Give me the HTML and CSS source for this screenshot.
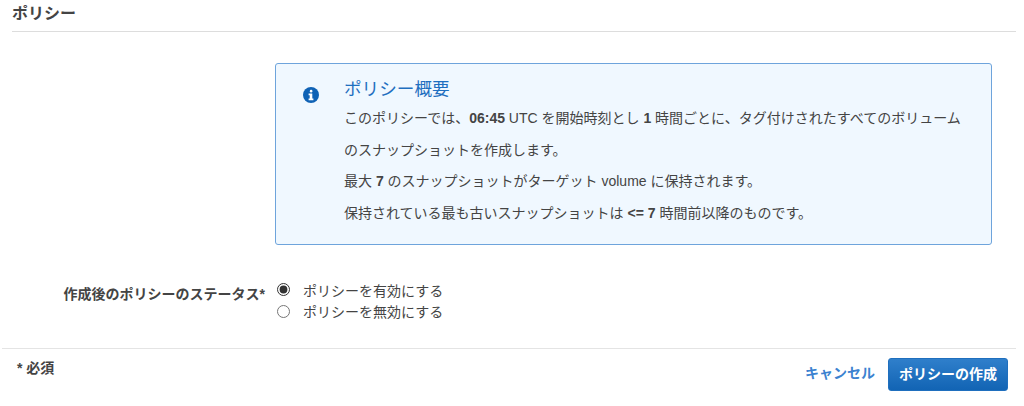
FILE: index.html
```html
<!DOCTYPE html>
<html lang="ja">
<head>
<meta charset="utf-8">
<title>ポリシー</title>
<link rel="stylesheet" href="styles.css">
</head>
<body>
<main class="page">
  <header class="section-head"><h2 class="section-title">ポリシー</h2></header>
  <div class="summary-row">
    <section class="info-box">
      <svg class="info-icon" width="16" height="16" viewBox="0 0 16 16" aria-hidden="true">
        <circle cx="8" cy="8" r="8" fill="#0f62b5"/>
        <rect x="6.8" y="2.8" width="2.6" height="2.6" rx="1.2" fill="#fff"/>
        <path d="M5.6 6.6h3.7v5h1.1v1.6H5.6v-1.6h1.1V8.2H5.6z" fill="#fff"/>
      </svg>
      <div class="info-body">
        <h3 class="info-title">ポリシー概要</h3>
        <p class="info-line">このポリシーでは、<b>06:45</b> UTC を開始時刻とし <b>1</b> 時間ごとに、タグ付けされたすべてのボリューム<br>のスナップショットを作成します。</p>
        <p class="info-line">最大 <b>7</b> のスナップショットがターゲット volume に保持されます。</p>
        <p class="info-line">保持されている最も古いスナップショットは <b>&lt;= 7</b> 時間前以降のものです。</p>
      </div>
    </section>
  </div>
  <div class="status-row">
    <div class="status-label">作成後のポリシーのステータス*</div>
    <div class="radio-group">
      <label class="radio-item"><input class="radio-input" type="radio" name="status" checked><span>ポリシーを有効にする</span></label>
      <label class="radio-item"><input class="radio-input" type="radio" name="status"><span>ポリシーを無効にする</span></label>
    </div>
  </div>
  <footer class="footer">
    <div class="required">* 必須</div>
    <div class="actions">
      <a class="cancel" href="#">キャンセル</a>
      <button class="primary" type="button">ポリシーの作成</button>
    </div>
  </footer>
</main>
</body>
</html>
```

FILE: styles.css
```css
* { box-sizing: border-box; }
html, body { margin: 0; padding: 0; background: #fff; }
body {
  width: 1024px;
  height: 406px;
  overflow: hidden;
  font-family: "Liberation Sans", "Noto Sans CJK JP", sans-serif;
  font-size: 14px;
  color: #444;
}
.section-head {
  margin: 0 8px 0 12px;
  height: 32px;
  border-bottom: 1px solid #ddd;
}
.section-title {
  margin: 0;
  padding-top: 3px;
  font-size: 16px;
  line-height: 22px;
  font-weight: 700;
  color: #444;
}
.summary-row {
  padding: 31px 32px 0 275px;
}
.info-box {
  display: flex;
  height: 182px;
  padding: 13px 20px 0 27px;
  background: #f0f8ff;
  border: 1px solid #6ea4dc;
  border-radius: 3px;
}
.info-icon { flex: none; margin-top: 10px; }
.info-body { margin-left: 25px; }
.info-title {
  margin: 0 0 2px;
  font-size: 17.6px;
  line-height: 24px;
  font-weight: 400;
  color: #1f6fc0;
}
.info-line {
  margin: 0;
  font-size: 14px;
  line-height: 31.7px;
  color: #444;
}
.status-row {
  display: flex;
  margin-top: 34px;
}
.status-label {
  width: 265px;
  padding-top: 5px;
  text-align: right;
  font-size: 14px;
  line-height: 20px;
  font-weight: 700;
  color: #444;
}
.radio-group {
  display: flex;
  flex-direction: column;
  margin-left: 12px;
}
.radio-item {
  display: flex;
  align-items: center;
  height: 21.5px;
  font-size: 14px;
  color: #444;
}
.radio-input {
  width: 13px;
  height: 13px;
  margin: 0 13px 0 0;
  accent-color: #333;
}
.footer {
  display: flex;
  justify-content: space-between;
  align-items: flex-start;
  margin: 26px 8px 0 2px;
  padding-top: 9px;
  border-top: 1px solid #e4e4e4;
}
.required {
  margin-left: 15px;
  font-size: 14px;
  line-height: 20px;
  font-weight: 700;
  color: #444;
}
.actions {
  display: flex;
  align-items: center;
  margin-right: 8px;
}
.cancel {
  margin: 0 13px 5px 0;
  font-size: 14px;
  font-weight: 700;
  text-decoration: none;
  color: #3b82d0;
}
.primary {
  width: 120px;
  height: 33px;
  padding: 0 0 3px;
  font-family: inherit;
  font-size: 14px;
  font-weight: 700;
  color: #fff;
  background: linear-gradient(#2f7fcb, #1264b4);
  border: 1px solid #1f6fbe;
  border-radius: 3px;
}
```
